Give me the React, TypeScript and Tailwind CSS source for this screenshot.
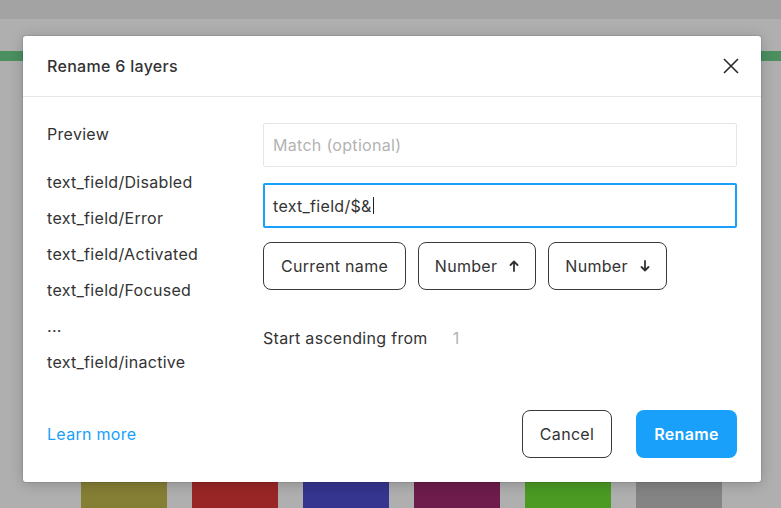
import React from 'react';

const previewNames = [
  'text_field/Disabled',
  'text_field/Error',
  'text_field/Activated',
  'text_field/Focused',
  '...',
  'text_field/inactive',
];

const swatches = ['bg-[#857f35]', 'bg-[#992626]', 'bg-[#35348f]', 'bg-[#6d1c4b]', 'bg-[#4a9a23]', 'bg-[#848484]'];

const ArrowUp = () => (
  <svg width="10" height="12" viewBox="0 0 10 12" fill="none" stroke="#333" strokeWidth="1.8" strokeLinecap="round" strokeLinejoin="round">
    <path d="M5 11V1.5M1.5 5L5 1.5L8.5 5" />
  </svg>
);

const ArrowDown = () => (
  <svg width="10" height="12" viewBox="0 0 10 12" fill="none" stroke="#333" strokeWidth="1.8" strokeLinecap="round" strokeLinejoin="round">
    <path d="M5 1V10.5M1.5 7L5 10.5L8.5 7" />
  </svg>
);

const CloseIcon = () => (
  <svg width="16" height="16" viewBox="0 0 16 16" fill="none" stroke="#2a2a2a" strokeWidth="1.6">
    <path d="M1 1L15 15M15 1L1 15" />
  </svg>
);

const RenameDialog: React.FC = () => (
  <div className="absolute left-[23px] top-[36px] w-[738px] rounded-[3px] bg-white tracking-[0.3px] shadow-[0_0_0_1px_rgba(0,0,0,0.08),0_2px_14px_rgba(0,0,0,0.2)]">
    <div className="flex h-[61px] items-center justify-between border-b border-[#e6e6e6] pl-6 pr-[22px]">
      <span className="text-[16px] font-medium text-[#333]">Rename 6 layers</span>
      <button className="flex h-4 w-4 items-center justify-center">
        <CloseIcon />
      </button>
    </div>

    <div className="flex px-6 pb-[30px] pt-[26px]">
      <div className="w-[216px] shrink-0 text-[16px] text-[#333]">
        <div className="mb-[19px] leading-[22px]">Preview</div>
        {previewNames.map((name, i) => (
          <div key={i} className="h-9 leading-9">
            {name}
          </div>
        ))}
      </div>

      <div className="flex flex-1 flex-col">
        <div className="flex h-[44px] items-center rounded-[2px] border border-[#e6e6e6] px-[9px] text-[16px] text-[#b3b3b3]">
          Match (optional)
        </div>
        <div className="mt-4 flex h-[45px] items-center rounded-[2px] border-2 border-[#18a0fb] px-2 text-[16px] text-[#333]">
          <span>text_field/$&amp;</span>
          <span className="ml-px h-[17px] w-[1.5px] bg-[#222]" />
        </div>

        <div className="mt-[14px] flex gap-3">
          <button className="flex h-12 items-center rounded-lg border border-[#3a3a3a] px-[17px] text-[16px] text-[#333]">
            Current name
          </button>
          <button className="flex h-12 w-[118px] items-center justify-center gap-3 rounded-lg border border-[#3a3a3a] text-[16px] text-[#333]">
            Number <ArrowUp />
          </button>
          <button className="flex h-12 w-[119px] items-center justify-center gap-3 rounded-lg border border-[#3a3a3a] text-[16px] text-[#333]">
            Number <ArrowDown />
          </button>
        </div>

        <div className="mt-9 flex text-[16px] leading-6">
          <span className="text-[#333]">Start ascending from</span>
          <span className="ml-[25px] text-[#b3b3b3]">1</span>
        </div>
      </div>
    </div>

    <div className="flex items-center justify-between px-6 pb-6">
      <a className="text-[16px] text-[#18a0fb]">Learn more</a>
      <div className="flex gap-6">
        <button className="h-12 w-[90px] rounded-lg border border-[#3a3a3a] text-[16px] text-[#333]">Cancel</button>
        <button className="h-12 w-[101px] rounded-lg bg-[#18a0fb] text-[16px] font-semibold text-white">Rename</button>
      </div>
    </div>
  </div>
);

export default function App() {
  return (
    <div className="relative h-[508px] w-[781px] overflow-hidden bg-[#afafaf] font-['Inter','Noto_Sans',sans-serif]">
      <div className="flex h-full flex-col">
        <div className="h-[19px] bg-[#a3a3a3]" />
        <div className="mt-[32px] h-[10px] bg-[#4b8f5f]" />
        <div className="mt-auto flex gap-[25px] pl-[81px]">
          {swatches.map((c, i) => (
            <div key={i} className={`h-[60px] w-[86px] ${c}`} />
          ))}
        </div>
      </div>
      <RenameDialog />
    </div>
  );
}
